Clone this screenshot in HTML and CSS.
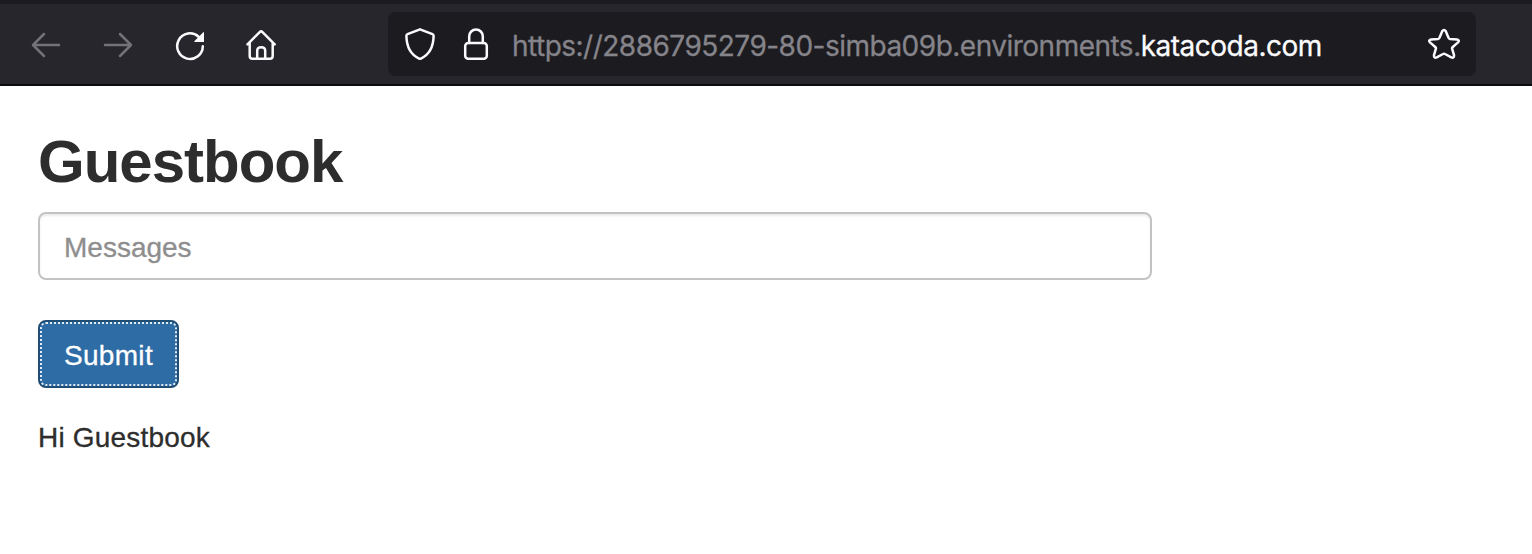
FILE: index.html
```html
<!DOCTYPE html>
<html lang="en">
<head>
<meta charset="utf-8">
<title>Guestbook</title>
<link rel="stylesheet" href="styles.css">
</head>
<body>
<header class="toolbar">
  <nav class="nav">
    <svg class="icon dim" viewBox="0 0 32 32"><path d="M29 16H3.500M14 5L3 16L14 27"/></svg>
    <svg class="icon dim" viewBox="0 0 32 32"><path d="M3 16H28.500M18 5L29 16L18 27"/></svg>
    <svg class="icon" viewBox="0 0 32 32"><path d="M28.800 17.200A12.800 12.800 0 1 1 24.600 7.700"/><path class="solid" d="M29 3.400q1-1 1 .5V13H21q-1.500 0-.5-1.100z"/></svg>
    <svg class="icon" viewBox="0 0 32 32"><path d="M1.500 15.300L13.700 3.100Q15.100 1.700 16.500 3.100L28.700 15.300M3.700 13.500V27Q3.700 29.800 6.500 29.800H23.900Q26.700 29.800 26.700 27V13.500M11.200 29.800V21.800Q11.200 18.300 15.200 18.300T19.200 21.800V29.800"/></svg>
  </nav>
  <div class="address">
    <svg class="icon shield" viewBox="0 0 32 32"><path d="M16 1.300L28.500 6.200Q29.700 6.800 29.600 8.300C29.300 19 25.300 26.500 17.300 30.300Q16 31 14.700 30.300C6.700 26.500 2.700 19 2.400 8.300Q2.300 6.800 3.500 6.200Z"/></svg>
    <svg class="icon lock" viewBox="0 0 32 32"><rect x="5.200" y="15" width="21.600" height="15.800" rx="3"/><path d="M9.200 15V8.300A6.800 6.800 0 0 1 22.800 8.300V15"/></svg>
    <div class="url"><span class="host">https://2886795279-80-simba09b.environments.</span><span class="domain">katacoda.com</span></div>
    <svg class="icon star" viewBox="0 0 32 32"><path d="M14.300 3.100Q16 .8 17.700 3.100L20.600 9.900Q21 10.900 22 11L29 11.500Q32 12.200 30 14.400L24.500 19.200Q23.900 19.800 24.100 20.700L26 27.200Q26.300 30.400 23.300 29.400L17 26Q16 25.400 15 26L8.700 29.400Q5.700 30.400 6 27.200L7.900 20.700Q8.100 19.800 7.500 19.200L2 14.400Q0 12.200 3 11.500L10 11Q11 10.900 11.400 9.900Z"/></svg>
  </div>
</header>
<main class="page">
  <h1 class="title">Guestbook</h1>
  <form class="form">
    <input class="field" type="text" placeholder="Messages" aria-label="Messages">
    <button class="submit" type="button"><span class="label">Submit</span></button>
  </form>
  <p class="entry">Hi Guestbook</p>
</main>
</body>
</html>
```
FILE: styles.css
```css
* { box-sizing: border-box; }

body {
  margin: 0;
  background: #fff;
  color: #2d2d2d;
  font-family: "Liberation Sans", Arial, sans-serif;
  overflow: hidden;
}

.toolbar {
  height: 86px;
  padding: 8px 56px 8px 30px;
  border-top: 4px solid #1c1b22;
  border-bottom: 2px solid #0c0c0d;
  background: #27262c;
  display: flex;
  gap: 111px;
}

.nav { display: flex; align-items: center; gap: 40px; width: 247px; padding-top: 2px; }

.icon {
  display: block;
  flex: none;
  width: 32px;
  height: 32px;
  fill: none;
  stroke: #fbfbfe;
  stroke-width: 2.5;
  stroke-linecap: round;
  stroke-linejoin: round;
}

.dim { stroke: #737278; }
.solid { fill: #fbfbfe; stroke: none; }

.address {
  flex: 1;
  height: 64px;
  padding: 0 16px;
  border-radius: 8px;
  background: #1c1b20;
  display: flex;
  align-items: center;
}

.lock { margin-left: 24px; }

.url {
  flex: 1;
  margin-left: 20px;
  padding-top: 3px;
  font-family: Inter, sans-serif;
  font-size: 28px;
  line-height: 34px;
  letter-spacing: -.51px;
  white-space: nowrap;
  -webkit-text-stroke: .3px currentColor;
}

.host { color: #85848a; }
.domain { color: #fbfbfe; }

.page { padding: 43px 38px 0; }

.title {
  margin: 0;
  font-size: 60px;
  line-height: 66px;
  font-weight: 700;
  letter-spacing: -1px;
}

.form {
  margin-top: 17px;
  display: flex;
  flex-direction: column;
  align-items: flex-start;
  gap: 40px;
}

.field {
  width: 1114px;
  height: 68px;
  padding: 3px 24px 0;
  border: 2px solid #c3c3c3;
  border-radius: 8px;
  box-shadow: inset 0 2px 2px rgba(0, 0, 0, .075);
  font: 28px/40px "Liberation Sans", Arial, sans-serif;
  -webkit-text-stroke: .3px #8e8e8e;
}

.field::placeholder { color: #8e8e8e; opacity: 1; }

.submit {
  width: 141px;
  height: 68px;
  padding: 0;
  border: 2px solid #204d74;
  border-radius: 8px;
  background: #2d6ca5;
  color: #fff;
  font: 28px/40px "Liberation Sans", Arial, sans-serif;
  letter-spacing: .3px;
  -webkit-text-stroke: .3px currentColor;
}

.label {
  display: flex;
  align-items: center;
  justify-content: center;
  width: 137px;
  height: 64px;
  padding-top: 3px;
  border: 2px dotted #e4edf5;
  border-radius: 6px;
}

.entry {
  margin: 30px 0 0;
  font-size: 28px;
  line-height: 40px;
  letter-spacing: .2px;
  -webkit-text-stroke: .3px currentColor;
}
```
